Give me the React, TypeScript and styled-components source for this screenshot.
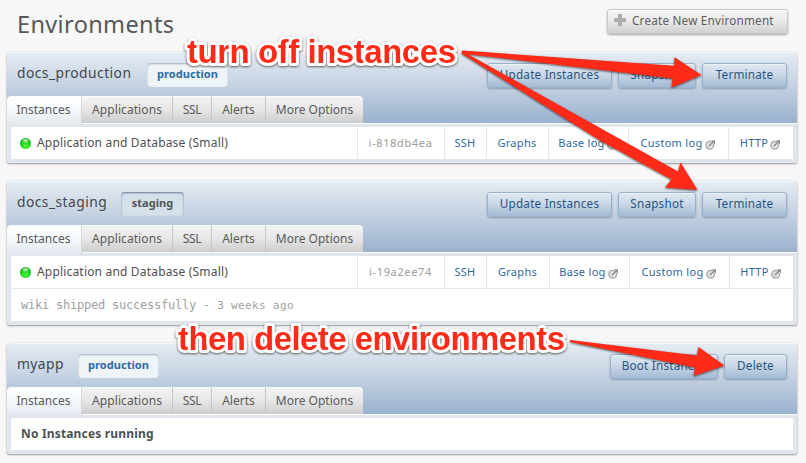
import React from "react";
import styled, { createGlobalStyle, css } from "styled-components";

const GlobalStyle = createGlobalStyle`
  * { box-sizing: border-box; }
  html, body, #root { height: 100%; }
  body {
    margin: 0;
    background: #f7f7f7;
    font-family: "Noto Sans", "Lucida Grande", sans-serif;
    color: #505050;
    overflow: hidden;
  }
`;

const Page = styled.main`
  position: relative;
  width: 806px;
  height: 463px;
  padding: 0 9px 0 7px;
  overflow: hidden;
`;

const PageHeader = styled.header`
  display: flex;
  justify-content: space-between;
  align-items: flex-start;
  height: 52px;
  padding: 9px 9px 0 10px;
`;

const Title = styled.h1`
  margin: -1px 0 0;
  font-size: 23.5px;
  line-height: 32px;
  font-weight: 400;
  letter-spacing: 0.36px;
  color: #585858;
`;

const Button = styled.button<{ $w: number; $tone?: "gray" }>`
  display: inline-flex;
  align-items: center;
  justify-content: center;
  width: ${(p) => p.$w}px;
  height: 25px;
  padding: 0 0 3px;
  border: 1px solid #9ab1cb;
  border-radius: 3px;
  background: linear-gradient(#dfe8f1, #cbd8e7 45%, #a3bad4);
  box-shadow: 0 1px 2px rgba(60, 80, 110, 0.4), inset 0 1px 0 rgba(255, 255, 255, 0.45);
  color: #2a5580;
  font: 400 11.7px/20px "Noto Sans", sans-serif;
  letter-spacing: 0.22px;
  white-space: nowrap;
  ${(p) =>
    p.$tone === "gray" &&
    css`
      justify-content: flex-start;
      gap: 6px;
      padding-left: 6px;
      border-color: #c8c8c8;
      background: linear-gradient(#f6f6f6, #e8e8e8 50%, #d0d0d0);
      box-shadow: 0 1px 2px rgba(0, 0, 0, 0.35), inset 0 1px 0 #fff;
      color: #5c5c5c;
    `}
`;

const Panel = styled.section`
  margin-bottom: 18px;
  border-radius: 4px 4px 2px 2px;
  background: #e0e6ec;
  box-shadow: 0 1px 2px rgba(0, 0, 0, 0.36), 0 0 3px rgba(0, 0, 0, 0.08);
`;

const PanelTop = styled.div`
  display: flex;
  flex-direction: column;
  height: 71px;
  border-top: 1px solid #f4f7fa;
  border-radius: 4px 4px 0 0;
  background: linear-gradient(#e4ebf2, #c3d1e1 48%, #9ab2ce);
`;

const PanelBar = styled.div`
  display: flex;
  align-items: flex-start;
  height: 43px;
  padding: 10px 10px 0 10px;
`;

const Name = styled.h2<{ $w: number }>`
  flex: none;
  width: ${(p) => p.$w}px;
  margin: 0;
  font-size: 13.8px;
  font-weight: 400;
  line-height: 20px;
  letter-spacing: 0.46px;
  color: #43474b;
  white-space: nowrap;
`;

const Badge = styled.span<{ $w: number; $live?: boolean }>`
  display: flex;
  align-items: center;
  justify-content: center;
  width: ${(p) => p.$w}px;
  height: 24px;
  padding-bottom: 3px;
  border-radius: 4px;
  font-size: 11px;
  font-weight: 700;
  letter-spacing: 0.04px;
  color: ${(p) => (p.$live ? "#2a6ba8" : "#555")};
  background: ${(p) => (p.$live ? "#eff4f8" : "#d6e0eb")};
  box-shadow: inset 0 1px 2px rgba(70, 90, 120, ${(p) => (p.$live ? 0.45 : 0.75)});
`;

const Actions = styled.div`
  display: flex;
  gap: 6px;
  margin-left: auto;
`;

const Tabs = styled.nav`
  display: flex;
  height: 27px;
`;

const Tab = styled.a<{ $w: number; $active?: boolean; $ls: number }>`
  display: flex;
  align-items: center;
  justify-content: center;
  width: ${(p) => p.$w}px;
  height: 27px;
  padding-bottom: 2px;
  font-size: 12px;
  letter-spacing: ${(p) => p.$ls}px;
  white-space: nowrap;
  color: #5a5a5a;
  background: linear-gradient(#f3f3f3, #e6e6e6 50%, #cdcdcd);
  border-right: 1px solid #c6c6c6;
  border-top: 1px solid #fafafa;

  &:last-child {
    border-right: 0;
    border-top-right-radius: 4px;
  }
  ${(p) =>
    p.$active &&
    css`
      height: 30px;
      padding: 0 1px 5px 0;
      border-right-color: #d4d8dd;
      border-top-left-radius: 4px;
      background: linear-gradient(#ffffff, #f3f7fb 50%, #e0e6ec);
      position: relative;
    `}
`;

const PanelBody = styled.div`
  padding: 3px 4px 4px;
  border-top: 1px solid #fafcfd;
`;

const Row = styled.div`
  display: flex;
  height: 32px;
  background: #fff;

  & + & {
    height: 33px;
    border-top: 1px solid #e2e8ed;
  }
`;

const Cell = styled.div<{ $w?: number }>`
  display: flex;
  align-items: center;
  justify-content: center;
  gap: 2px;
  flex: ${(p) => (p.$w ? `0 0 ${p.$w}px` : "1")};
  padding: 0 1px 1px 0;
  border-left: 1px solid #e0e7ee;
  font-size: 11px;
  letter-spacing: 0.3px;
  white-space: nowrap;
  color: #2f689d;

  svg {
    margin-top: 3px;
  }
`;

const InstanceCell = styled(Cell)`
  justify-content: flex-start;
  gap: 6px;
  padding-left: 9px;
  border-left: 0;
  font-size: 12px;
  letter-spacing: 0.18px;
  color: #505050;
`;

const IdCell = styled(Cell)`
  color: #9c9c9c;
  letter-spacing: 0.65px;
`;

const Log = styled.div`
  display: flex;
  align-items: center;
  padding-left: 10px;
  font: 12px "DejaVu Sans Mono", monospace;
  letter-spacing: -0.22px;
  color: #a0a0a0;
  white-space: pre;

  small {
    font-size: 11px;
    letter-spacing: 0.36px;
  }
`;

const Empty = styled.strong`
  align-self: center;
  padding: 0 0 1px 10px;
  font-size: 12px;
  letter-spacing: 0.17px;
  color: #505050;
`;

const Light = styled.i`
  width: 11px;
  height: 11px;
  margin-top: 2px;
  border-radius: 50%;
  background:
    radial-gradient(ellipse 4px 2.5px at 50% 24%, #d8ffd0, rgba(216, 255, 208, 0)),
    radial-gradient(circle at 50% 75%, #4cf83c, #17c417 60%, #1c8c1c);
`;

const Overlay = styled.svg`
  position: absolute;
  top: 0;
  left: 0;
  z-index: 5;
  display: block;
  overflow: visible;
  pointer-events: none;
  filter: drop-shadow(0 1.5px 1.3px rgba(0, 0, 0, 0.6));
`;

const Caption = styled.text`
  font: 700 33px "Liberation Sans", Arial, sans-serif;
  fill: #ff2a17;
  stroke: #fff;
  stroke-width: 6px;
  stroke-linejoin: round;
  paint-order: stroke;
`;

const OutIcon = () => (
  <svg width="11" height="11" viewBox="0 0 11 11" fill="none">
    <circle cx="4.7" cy="6.2" r="3.9" fill="#e2e2e2" stroke="#ababab" strokeWidth="1.3" />
    <path d="M5 1 H10.2 V6.2 Z" fill="#fff" />
    <path d="M3.8 7.2 L8 3" stroke="#8c8c8c" strokeWidth="1.3" />
    <path d="M5.8 1.2 H10 V5.4 Z" fill="#8c8c8c" />
  </svg>
);

const PlusIcon = () => (
  <svg width="12" height="12" viewBox="0 0 12 12">
    <path d="M4 0h4v4h4v4H8v4H4V8H0V4h4z" fill="#adadad" />
  </svg>
);

const TABS = [
  { label: "Instances", w: 75, ls: 0 },
  { label: "Applications", w: 91, ls: 0.08 },
  { label: "SSL", w: 39, ls: -0.3 },
  { label: "Alerts", w: 54, ls: 0 },
  { label: "More Options", w: 97, ls: 0 },
];

type Action = { label: string; w: number };

type EnvProps = {
  name: string;
  nameWidth: number;
  stage: string;
  actions: Action[];
  children: React.ReactNode;
};

const FULL_ACTIONS: Action[] = [
  { label: "Update Instances", w: 125 },
  { label: "Snapshot", w: 78 },
  { label: "Terminate", w: 85 },
];

function Environment({ name, nameWidth, stage, actions, children }: EnvProps) {
  const live = stage === "production";
  return (
    <Panel>
      <PanelTop>
        <PanelBar>
          <Name $w={nameWidth}>{name}</Name>
          <Badge $w={live ? 81 : 63} $live={live}>{stage}</Badge>
          <Actions>
            {actions.map((a) => (
              <Button key={a.label} $w={a.w}>{a.label}</Button>
            ))}
          </Actions>
        </PanelBar>
        <Tabs>
          {TABS.map((t, i) => (
            <Tab key={t.label} $w={t.w} $ls={t.ls} $active={i === 0}>{t.label}</Tab>
          ))}
        </Tabs>
      </PanelTop>
      <PanelBody>{children}</PanelBody>
    </Panel>
  );
}

function InstanceRow({ id, widths }: { id: string; widths: number[] }) {
  return (
    <Row>
      <InstanceCell><Light />Application and Database (Small)</InstanceCell>
      <IdCell $w={widths[0]}>{id}</IdCell>
      <Cell $w={widths[1]}>SSH</Cell>
      <Cell $w={widths[2]}>Graphs</Cell>
      <Cell $w={widths[3]}>Base log<OutIcon /></Cell>
      <Cell $w={widths[4]}>Custom log<OutIcon /></Cell>
      <Cell $w={widths[5]}>HTTP<OutIcon /></Cell>
    </Row>
  );
}

function Annotations() {
  return (
    <Overlay width="806" height="463" viewBox="0 0 806 463">
      <g fill="#ff2a17">
        <path d="M462 50.5 L674 65.7 L674.5 57.2 L701.5 75 L671.5 87.5 L672.5 78.5 L462 53.5 Z" />
        <path d="M462 51 L678 171.5 L680.5 162.5 L697.5 190 L665 187.5 L671.5 179.5 L600 140.5 L461.5 53.5 Z" />
        <path d="M570 340 L697 355.5 L698.5 347 L724.5 365.5 L693.5 376 L695 367.5 L570 342 Z" />
      </g>
      <Caption x="187" y="63" textLength="269">turn off instances</Caption>
      <Caption x="178" y="350" textLength="387">then delete environments</Caption>
    </Overlay>
  );
}

export default function App() {
  return (
    <Page>
      <GlobalStyle />
      <PageHeader>
        <Title>Environments</Title>
        <Button $w={181} $tone="gray"><PlusIcon />Create New Environment</Button>
      </PageHeader>
      <Environment name="docs_production" nameWidth={130} stage="production" actions={FULL_ACTIONS}>
        <InstanceRow id="i-818db4ea" widths={[87, 42, 62, 80, 100, 65]} />
      </Environment>
      <Environment name="docs_staging" nameWidth={104} stage="staging" actions={FULL_ACTIONS}>
        <InstanceRow id="i-19a2ee74" widths={[87, 42, 63, 80, 100, 64]} />
        <Row><Log>wiki shipped successfully - <small>3 weeks ago</small></Log></Row>
      </Environment>
      <Environment
        name="myapp"
        nameWidth={61}
        stage="production"
        actions={[{ label: "Boot Instances", w: 108 }, { label: "Delete", w: 63 }]}
      >
        <Row><Empty>No Instances running</Empty></Row>
      </Environment>
      <Annotations />
    </Page>
  );
}
